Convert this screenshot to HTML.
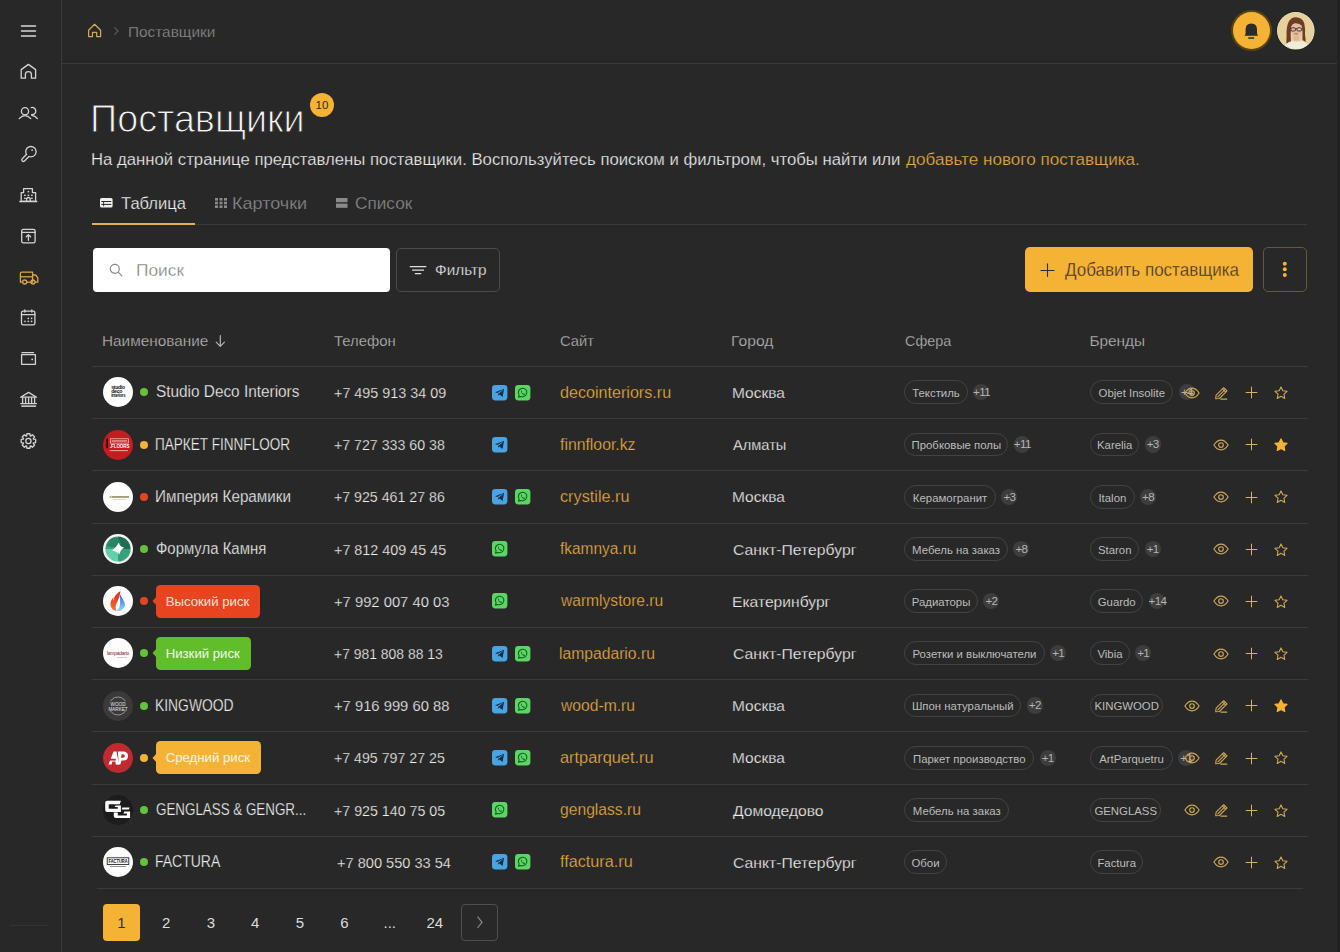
<!DOCTYPE html><html><head><meta charset="utf-8"><style>
*{box-sizing:border-box;margin:0;padding:0}
html,body{width:1340px;height:952px;overflow:hidden;background:#282828;font-family:"Liberation Sans",sans-serif}
.t{position:absolute;line-height:1;white-space:nowrap}
.a{position:absolute}
svg{position:absolute;overflow:visible}
</style></head><body>
<div class="a" style="left:61px;top:0;width:1px;height:952px;background:#3a3a3a"></div>
<div class="a" style="left:62px;top:63px;width:1276px;height:1px;background:#3a3a3a"></div>
<div class="a" style="left:1337px;top:0;width:3px;height:952px;background:#222"></div>
<svg style="left:0;top:0" width="62" height="60"><g stroke="#d8d8d8" stroke-width="1.5" stroke-linecap="round"><path d="M21.5 26H35.5M21.5 31H35.5M21.5 36H35.5"/></g></svg>
<svg style="left:0;top:0" width="1" height="1"><path d="M88.6 36.6V30.3L94.6 24.3L100.6 30.3V36.6H96.7V32.4H92.5V36.6Z" fill="none" stroke="#CFA955" stroke-width="1.25" stroke-linejoin="round"/></svg>
<svg style="left:0;top:0" width="1" height="1"><path d="M114.3 27.4L118.1 31L114.3 34.6" fill="none" stroke="#5c5c5c" stroke-width="1.2"/></svg>
<div class="t" style="left:128.30px;top:23.56px;font-size:15.4px;color:#8c8c8c;font-weight:normal;transform:scaleX(0.9974);transform-origin:0 0;-webkit-text-stroke:0.25px #282828;">Поставщики</div>
<div class="a" style="left:1230.5px;top:10px;width:41px;height:41px;border-radius:50%;background:#5a4313"></div>
<div class="a" style="left:1232.5px;top:12px;width:37px;height:37px;border-radius:50%;background:#F5B335"></div>
<svg style="left:0;top:0" width="1" height="1"><path d="M1244.6 35.7L1245.6 33.5V29.5Q1245.6 23.4 1251.3 23.4Q1257 23.4 1257 29.5V33.5L1258 35.7Z" fill="#2b2b2b"/><rect x="1248.3" y="37.3" width="5.8" height="1.5" fill="#2b2b2b"/></svg>
<svg style="left:1276.4px;top:10.9px" width="39.6" height="39.6" viewBox="-1 -1 39.6 39.6">
<defs><clipPath id="av"><circle cx="18.8" cy="18.8" r="18.3"/></clipPath></defs>
<circle cx="18.8" cy="18.8" r="19.6" fill="#1f1f1f"/>
<circle cx="18.8" cy="18.8" r="18.8" fill="#efe3c2"/>
<g clip-path="url(#av)">
<rect x="-1" y="-1" width="40" height="40" fill="#e6d09c"/>
<path d="M10.5 36Q8.6 30 9.6 24Q9 16 11.5 10Q14 5 19 5.2Q25 5.4 27.2 11Q28.6 17 28 23Q28.8 27 28.6 30L25.5 28Q26 20 24.5 13Q20 10 14.5 14Q13 22 14 30Q12.8 33 12 37Z" fill="#6e3d22"/>
<ellipse cx="19.4" cy="17.8" rx="5.6" ry="7.6" fill="#e2bda4"/>
<path d="M13.8 13.5Q16 8 20 8.5Q25 9 25.5 14Q22 10.8 18 11.2Q15 12 13.8 13.5Z" fill="#6e3d22"/>
<g fill="none" stroke="#3b2a24" stroke-width="0.9"><rect x="13.9" y="15.8" width="4.6" height="3.2" rx="1.2"/><rect x="19.9" y="15.8" width="4.6" height="3.2" rx="1.2"/><path d="M18.5 16.8H19.9"/></g>
<path d="M17.4 21.4Q19.2 22.4 21 21.4Q19.2 22.9 17.4 21.4Z" fill="#c55a4a" stroke="#c55a4a" stroke-width="0.6"/>
<path d="M16.5 24.5V28.5H22.2V24.5Z" fill="#ddb49c"/>
<path d="M5 40Q7 30.5 15 29Q19.5 30.5 24 29Q32 30 34 40Z" fill="#f1ebda"/>
</g></svg>
<svg style="left:0;top:0" width="62" height="460"><g fill="none" stroke="#d4d4d4" stroke-width="1.3" stroke-linejoin="round" stroke-linecap="round">
<path d="M21.2 78.2V69.6L28.4 64.4L35.6 69.6V78.2H31.4V74.3Q31.4 71.6 28.4 71.6Q25.4 71.6 25.4 74.3V78.2Z"/>
<circle cx="25" cy="111.2" r="3.6"/>
<path d="M19.2 118.6Q25 112.6 30.8 118.6"/>
<path d="M31.2 107.6A3.6 3.6 0 1 1 31.6 114.6"/>
<path d="M31.8 115.3Q35.2 115.6 37.4 118.6"/>
<path d="M23.6 188.6H32.4V192.6H35.6V201.3H21.2V192.6H23.6Z"/>
<path d="M19.8 201.5H36.8"/>
<path d="M26.6 201.3V198.4Q28.4 196.6 30.2 198.4V201.3"/>
<rect x="21.7" y="229.4" width="13.4" height="13.4" rx="1.6"/>
<path d="M21.7 232.4H35.1M28.4 240.3V234.6M26.2 236.8L28.4 234.6L30.6 236.8"/>
<rect x="21.5" y="311.2" width="13.4" height="13.6" rx="1.6"/>
<path d="M21.5 314.6H34.9M24.8 309.8V312M31.8 309.8V312"/>
<path d="M21.6 354.7H35.4V364.3H21.6Z"/>
<path d="M21.9 352.6H33.6"/>
<path d="M20.6 397.2L28.6 392.4L36.6 397.2Z"/>
<path d="M22.6 398V403M25.6 398V403M28.6 398V403M31.6 398V403M34.6 398V403"/>
<path d="M20.8 403.6H36.4"/>
<path d="M33.48 439.17 L35.64 439.48 L35.64 442.52 L33.48 442.83 L33.29 443.30 L34.60 445.04 L32.44 447.20 L30.70 445.89 L30.23 446.08 L29.92 448.24 L26.88 448.24 L26.57 446.08 L26.10 445.89 L24.36 447.20 L22.20 445.04 L23.51 443.30 L23.32 442.83 L21.16 442.52 L21.16 439.48 L23.32 439.17 L23.51 438.70 L22.20 436.96 L24.36 434.80 L26.10 436.11 L26.57 435.92 L26.88 433.76 L29.92 433.76 L30.23 435.92 L30.70 436.11 L32.44 434.80 L34.60 436.96 L33.29 438.70Z"/>
<circle cx="28.4" cy="441" r="2.6"/>
</g>
<g fill="#d4d4d4">
<rect x="24.1" y="194.6" width="1.6" height="1.4"/><rect x="27.6" y="194.6" width="1.6" height="1.4"/><rect x="31.1" y="194.6" width="1.6" height="1.4"/>
<rect x="27.6" y="191" width="1.6" height="1.4"/><rect x="24.1" y="197.6" width="1.6" height="1.4"/><rect x="31.1" y="197.6" width="1.6" height="1.4"/>
<rect x="21.3" y="405.4" width="14.8" height="1.5"/>
<circle cx="28.3" cy="318.3" r="0.85"/><circle cx="31.6" cy="318.3" r="0.85"/><circle cx="25" cy="321.3" r="0.85"/><circle cx="28.3" cy="321.3" r="0.85"/><circle cx="31.6" cy="321.3" r="0.85"/>
<circle cx="32.2" cy="359.4" r="0.9"/>
</g>
<path d="M28 155.2L23.4 159.8" stroke="#d4d4d4" stroke-width="4.5" stroke-linecap="round"/>
<circle cx="30.9" cy="151.7" r="5.85" fill="#d4d4d4"/>
<path d="M28 155.2L23.4 159.8" stroke="#282828" stroke-width="1.9" stroke-linecap="round"/>
<circle cx="30.9" cy="151.7" r="4.55" fill="#282828"/>
<circle cx="32.1" cy="150.1" r="0.9" fill="#d4d4d4"/>
<g fill="none" stroke="#D9A843" stroke-width="1.3" stroke-linejoin="round">
<path d="M22.6 282.2H20.4V273.6Q20.4 272.2 21.8 272.2H32.6V282.2H30.8"/>
<path d="M32.6 275H35.6L37.8 278V282.2H35"/>
<path d="M26.7 282.2H31"/>
<circle cx="24.7" cy="282" r="2"/>
<circle cx="33" cy="282" r="2"/>
<path d="M20.6 276.8H32.4"/>
</g>
</svg>
<div class="a" style="left:10px;top:925px;width:38px;height:1px;background:#333"></div>
<div class="t" style="left:90.02px;top:100.43px;font-size:38px;color:#f4f4f4;font-weight:normal;transform:scaleX(0.9935);transform-origin:0 0;-webkit-text-stroke:0.25px #282828;-webkit-text-stroke:1px #282828">Поставщики</div>
<div class="a" style="left:310px;top:93px;width:24px;height:24px;border-radius:50%;background:#F5B335;color:#2a2a2a;font-size:11.5px;line-height:24px;text-align:center">10</div>
<div class="t" style="left:91.15px;top:152.06px;font-size:16px;color:#f0f0f0;font-weight:normal;transform:scaleX(1.0452);transform-origin:0 0;-webkit-text-stroke:0.25px #282828;">На данной странице представлены поставщики. Воспользуйтесь поиском и фильтром, чтобы найти или</div>
<div class="t" style="left:906.30px;top:152.06px;font-size:16px;color:#EAAD40;font-weight:normal;transform:scaleX(1.0693);transform-origin:0 0;-webkit-text-stroke:0.25px #282828;">добавьте нового поставщика.</div>
<div class="a" style="left:92px;top:224px;width:1215px;height:1px;background:#3a3a3a"></div>
<div class="a" style="left:92px;top:222.5px;width:102.5px;height:2.5px;background:#E3AF50"></div>
<svg style="left:100.2px;top:197.8px" width="12.6" height="9.6" viewBox="0 0 12.6 9.6"><rect x="0" y="0" width="12.6" height="9.6" rx="1.6" fill="#f0f0f0"/><rect x="1.3" y="3" width="10" height="1" fill="#282828"/><rect x="1.3" y="5.9" width="10" height="1" fill="#282828"/><rect x="3.2" y="3" width="0.9" height="5.2" fill="#282828"/></svg>
<div class="t" style="left:120.50px;top:195.11px;font-size:17px;color:#f0f0f0;font-weight:normal;transform:scaleX(0.9747);transform-origin:0 0;-webkit-text-stroke:0.25px #282828;">Таблица</div>
<svg style="left:214.5px;top:198px" width="12" height="10" viewBox="0 0 12 10"><g fill="#8a8a8a"><rect x="0" y="0" width="3" height="2.6"/><rect x="0" y="3.7" width="3" height="2.6"/><rect x="0" y="7.4" width="3" height="2.6"/><rect x="4.5" y="0" width="3" height="2.6"/><rect x="4.5" y="3.7" width="3" height="2.6"/><rect x="4.5" y="7.4" width="3" height="2.6"/><rect x="9" y="0" width="3" height="2.6"/><rect x="9" y="3.7" width="3" height="2.6"/><rect x="9" y="7.4" width="3" height="2.6"/></g></svg>
<div class="t" style="left:232.34px;top:195.11px;font-size:17px;color:#8a8a8a;font-weight:normal;transform:scaleX(1.0604);transform-origin:0 0;-webkit-text-stroke:0.25px #282828;">Карточки</div>
<svg style="left:335.5px;top:198px" width="12" height="10" viewBox="0 0 12 10"><g fill="#8a8a8a"><rect x="0" y="0" width="11.5" height="4.2"/><rect x="0" y="5.6" width="11.5" height="4.2"/></g></svg>
<div class="t" style="left:354.50px;top:195.11px;font-size:17px;color:#8a8a8a;font-weight:normal;transform:scaleX(1.0118);transform-origin:0 0;-webkit-text-stroke:0.25px #282828;">Список</div>
<div class="a" style="left:92.5px;top:248px;width:297px;height:43.5px;border-radius:4px;background:#ffffff"></div>
<svg style="left:109px;top:263px" width="14" height="14" viewBox="0 0 14 14"><g fill="none" stroke="#8a8a8a" stroke-width="1.2"><circle cx="5.8" cy="5.8" r="4.5"/><path d="M9.2 9.2L12.8 12.8" stroke-linecap="round"/></g></svg>
<div class="t" style="left:135.97px;top:262.78px;font-size:16.8px;color:#7a7a7a;font-weight:normal;transform:scaleX(1.0334);transform-origin:0 0;-webkit-text-stroke:0.25px #282828;-webkit-text-stroke:0.3px #ffffff">Поиск</div>
<div class="a" style="left:395.5px;top:247.5px;width:104.5px;height:44px;border-radius:5px;border:1px solid #4b4b4b"></div>
<svg style="left:0;top:0" width="1" height="1"><g stroke="#e0e0e0" stroke-width="1.3" stroke-linecap="round"><path d="M410.3 266.7H425.8M412.6 270.2H423.5M415.4 273.7H420.7"/></g></svg>
<div class="t" style="left:434.60px;top:263.18px;font-size:14.2px;color:#eeeeee;font-weight:normal;transform:scaleX(1.0823);transform-origin:0 0;-webkit-text-stroke:0.25px #282828;">Фильтр</div>
<div class="a" style="left:1024.5px;top:247px;width:228.5px;height:45px;border-radius:5px;background:#F5B335"></div>
<svg style="left:0;top:0" width="1" height="1"><g stroke="#2e2e2e" stroke-width="1.1"><path d="M1047.5 263.5V277M1040.5 270.5H1054.5"/></g></svg>
<div class="t" style="left:1064.70px;top:262.30px;font-size:17.6px;color:#2b2b2b;font-weight:normal;transform:scaleX(0.9671);transform-origin:0 0;-webkit-text-stroke:0.25px #282828;-webkit-text-stroke:0.35px #F5B335">Добавить поставщика</div>
<div class="a" style="left:1262.5px;top:247px;width:44.5px;height:45px;border-radius:5px;border:1px solid #68583a"></div>
<svg style="left:0;top:0" width="1" height="1"><g fill="#F5B335"><circle cx="1284.8" cy="263.7" r="2"/><circle cx="1284.8" cy="269.3" r="2"/><circle cx="1284.8" cy="275" r="2"/></g></svg>
<div class="t" style="left:102.40px;top:332.56px;font-size:15.4px;color:#b6b6b6;font-weight:normal;transform:scaleX(0.9959);transform-origin:0 0;-webkit-text-stroke:0.25px #282828;">Наименование</div>
<svg style="left:0;top:0" width="1" height="1"><g fill="none" stroke="#b6b6b6" stroke-width="1.2" stroke-linecap="round" stroke-linejoin="round"><path d="M220.3 335.5V346.3M216.2 342.2L220.3 346.3L224.4 342.2"/></g></svg>
<div class="t" style="left:334.00px;top:332.56px;font-size:15.4px;color:#b6b6b6;font-weight:normal;transform:scaleX(0.9661);transform-origin:0 0;-webkit-text-stroke:0.25px #282828;">Телефон</div>
<div class="t" style="left:559.70px;top:332.56px;font-size:15.4px;color:#b6b6b6;font-weight:normal;transform:scaleX(0.9593);transform-origin:0 0;-webkit-text-stroke:0.25px #282828;">Сайт</div>
<div class="t" style="left:731.28px;top:332.56px;font-size:15.4px;color:#b6b6b6;font-weight:normal;transform:scaleX(1.0186);transform-origin:0 0;-webkit-text-stroke:0.25px #282828;">Город</div>
<div class="t" style="left:904.70px;top:332.56px;font-size:15.4px;color:#b6b6b6;font-weight:normal;transform:scaleX(0.9339);transform-origin:0 0;-webkit-text-stroke:0.25px #282828;">Сфера</div>
<div class="t" style="left:1089.40px;top:332.56px;font-size:15.4px;color:#b6b6b6;font-weight:normal;transform:scaleX(1.0000);transform-origin:0 0;-webkit-text-stroke:0.25px #282828;">Бренды</div>
<div class="a" style="left:92px;top:366px;width:1215.5px;height:1px;background:#3a3a3a"></div>
<div class="a" style="left:92px;top:418.2px;width:1215.5px;height:1px;background:#3a3a3a"></div>
<svg style="left:103px;top:377.30px" width="30" height="30" viewBox="0 0 30 30" font-family="Liberation Sans"><circle cx="15" cy="15" r="15" fill="#fdfdfd"/><g fill="#111" font-size="5.2" font-weight="bold" letter-spacing="-0.3"><text x="8.2" y="12.2">studio</text><text x="8.2" y="16.3">deco</text><text x="8.2" y="20.4" textLength="14" lengthAdjust="spacingAndGlyphs">interiors</text></g></svg>
<div class="a" style="left:140px;top:388.30px;width:8px;height:8px;border-radius:50%;background:#66C13A"></div>
<div class="t" style="left:155.50px;top:384.36px;font-size:16px;color:#f0f0f0;font-weight:normal;transform:scaleX(0.9598);transform-origin:0 0;-webkit-text-stroke:0.25px #282828;">Studio Deco Interiors</div>
<div class="t" style="left:334.00px;top:385.08px;font-size:15.5px;color:#f0f0f0;font-weight:normal;transform:scaleX(0.9263);transform-origin:0 0;-webkit-text-stroke:0.25px #282828;">+7 495 913 34 09</div>
<svg style="left:492.2px;top:384.60px" width="15.4" height="15.4" viewBox="0 0 16 16"><rect width="16" height="16" rx="3.5" fill="#4AA3E2"/><path d="M3.2 7.6L12.6 3.9L11 12.4L7.6 9.9L6.2 11.3L6.4 8.9L11.2 5.1L5.5 8.4Z" fill="#16324a"/><path d="M6.4 8.9L11.2 5.1" stroke="#7cc0ee" stroke-width="0.5"/></svg>
<svg style="left:514.7px;top:384.60px" width="15.4" height="15.4" viewBox="0 0 16 16"><rect width="16" height="16" rx="3.5" fill="#5ED465"/><path d="M3.6 12.6L4.3 10.2Q3.3 8.6 3.6 6.8Q4.3 3.8 7.6 3.4Q10.8 3.2 12.1 6Q13 8.7 11.1 10.9Q9 12.9 6 11.9Z" fill="none" stroke="#07661a" stroke-width="1.1" stroke-linejoin="round"/><path d="M6.2 5.9Q6 7.6 7.6 9.3Q9.2 10.6 10.3 10L10.3 9.3L9.2 8.7L8.6 9.2Q7.3 8.5 6.9 7.3L7.3 6.7L6.8 5.6Z" fill="#07661a"/></svg>
<div class="t" style="left:559.80px;top:384.66px;font-size:16px;color:#EAAD40;font-weight:normal;transform:scaleX(1.0075);transform-origin:0 0;-webkit-text-stroke:0.25px #282828;">decointeriors.ru</div>
<div class="t" style="left:731.80px;top:385.08px;font-size:15.5px;color:#f0f0f0;font-weight:normal;transform:scaleX(0.9981);transform-origin:0 0;-webkit-text-stroke:0.25px #282828;">Москва</div>
<div class="a" style="left:904.2px;top:380.40px;width:63.6px;height:23.8px;border:1px solid #434343;border-radius:12px;color:#bcbcbc;font-size:11.4px;line-height:21.8px;padding-top:1.9px;text-align:center;white-space:nowrap">Текстиль</div><div class="a" style="left:973.1px;top:384.20px;width:16.2px;height:16.2px;border-radius:50%;background:#3d3d3d;color:#b4b4b4;font-size:11.6px;line-height:16.2px;padding-top:0px;text-align:center;letter-spacing:-0.6px;white-space:nowrap">+11</div>
<div class="a" style="left:1090.2px;top:380.40px;width:83.3px;height:23.8px;border:1px solid #434343;border-radius:12px;color:#bcbcbc;font-size:11.4px;line-height:21.8px;padding-top:1.9px;text-align:center;white-space:nowrap">Objet Insolite</div><div class="a" style="left:1178.8px;top:384.20px;width:16.2px;height:16.2px;border-radius:50%;background:#3d3d3d;color:#b4b4b4;font-size:11.6px;line-height:16.2px;padding-top:0px;text-align:center;letter-spacing:-0.6px;white-space:nowrap">+4</div>
<svg style="left:1183.7px;top:386.6px" width="16" height="12" viewBox="0 0 16 12"><g fill="none" stroke="#CDA657" stroke-width="1.15"><path d="M0.9 6Q4 1.1 8 1.1Q12 1.1 15.1 6Q12 10.9 8 10.9Q4 10.9 0.9 6Z"/><circle cx="8" cy="6" r="2.3"/></g></svg>
<svg style="left:1214.4px;top:385.6px" width="14" height="14" viewBox="0 0 14 14"><g fill="none" stroke="#CDA657" stroke-width="1.1" stroke-linejoin="round" stroke-linecap="round"><path d="M1.7 12.7L2.1 9.2L9.7 1.6L13 4.9L5.4 12.5Z"/><path d="M3.8 10.9L11.3 3.3"/><path d="M8.4 2.9L11.7 6.2"/><path d="M6.8 13.1H12.8"/></g></svg>
<svg style="left:1245px;top:386px" width="13" height="13" viewBox="0 0 13 13"><g stroke="#D6B360" stroke-width="1"><path d="M6.5 0.7V12.3M0.7 6.5H12.3"/></g></svg>
<svg style="left:1274px;top:385.90000000000003px" width="14" height="14" viewBox="0 0 14 14"><path d="M7 0.9L8.85 4.75L13.05 5.3L9.95 8.2L10.75 12.4L7 10.35L3.25 12.4L4.05 8.2L0.95 5.3L5.15 4.75Z" fill="none" stroke="#CDA657" stroke-width="1.1" stroke-linejoin="round"/></svg>
<div class="a" style="left:92px;top:470.4px;width:1215.5px;height:1px;background:#3a3a3a"></div>
<svg style="left:103px;top:429.50px" width="30" height="30" viewBox="0 0 30 30" font-family="Liberation Sans"><circle cx="15" cy="15" r="15" fill="#C41C20"/><rect x="7.3" y="8.8" width="18.3" height="4.3" fill="none" stroke="#f3d0d0" stroke-width="0.7"/><rect x="8.6" y="10.2" width="15.6" height="1.5" fill="#e89a9a"/><rect x="3.3" y="8.6" width="1.6" height="9.6" fill="#1a0a0a"/><text x="6.8" y="18.2" font-size="4.6" font-weight="bold" fill="#fff" letter-spacing="-0.1">.FLOORS</text><rect x="6.8" y="20.3" width="18" height="0.8" fill="#f3c8c8"/></svg>
<div class="a" style="left:140px;top:440.50px;width:8px;height:8px;border-radius:50%;background:#F5B335"></div>
<div class="t" style="left:154.65px;top:436.56px;font-size:16px;color:#f0f0f0;font-weight:normal;transform:scaleX(0.8465);transform-origin:0 0;-webkit-text-stroke:0.25px #282828;">ПАРКЕТ FINNFLOOR</div>
<div class="t" style="left:334.00px;top:437.28px;font-size:15.5px;color:#f0f0f0;font-weight:normal;transform:scaleX(0.9147);transform-origin:0 0;-webkit-text-stroke:0.25px #282828;">+7 727 333 60 38</div>
<svg style="left:492.2px;top:436.80px" width="15.4" height="15.4" viewBox="0 0 16 16"><rect width="16" height="16" rx="3.5" fill="#4AA3E2"/><path d="M3.2 7.6L12.6 3.9L11 12.4L7.6 9.9L6.2 11.3L6.4 8.9L11.2 5.1L5.5 8.4Z" fill="#16324a"/><path d="M6.4 8.9L11.2 5.1" stroke="#7cc0ee" stroke-width="0.5"/></svg>
<div class="t" style="left:559.80px;top:436.86px;font-size:16px;color:#EAAD40;font-weight:normal;transform:scaleX(0.9871);transform-origin:0 0;-webkit-text-stroke:0.25px #282828;">finnfloor.kz</div>
<div class="t" style="left:732.80px;top:437.28px;font-size:15.5px;color:#f0f0f0;font-weight:normal;transform:scaleX(0.9430);transform-origin:0 0;-webkit-text-stroke:0.25px #282828;">Алматы</div>
<div class="a" style="left:904.2px;top:432.60px;width:104.3px;height:23.8px;border:1px solid #434343;border-radius:12px;color:#bcbcbc;font-size:11.4px;line-height:21.8px;padding-top:1.9px;text-align:center;white-space:nowrap">Пробковые полы</div><div class="a" style="left:1013.8px;top:436.40px;width:16.2px;height:16.2px;border-radius:50%;background:#3d3d3d;color:#b4b4b4;font-size:11.6px;line-height:16.2px;padding-top:0px;text-align:center;letter-spacing:-0.6px;white-space:nowrap">+11</div>
<div class="a" style="left:1090.2px;top:432.60px;width:49.1px;height:23.8px;border:1px solid #434343;border-radius:12px;color:#bcbcbc;font-size:11.4px;line-height:21.8px;padding-top:1.9px;text-align:center;white-space:nowrap">Karelia</div><div class="a" style="left:1144.6px;top:436.40px;width:16.2px;height:16.2px;border-radius:50%;background:#3d3d3d;color:#b4b4b4;font-size:11.6px;line-height:16.2px;padding-top:0px;text-align:center;letter-spacing:-0.6px;white-space:nowrap">+3</div>
<svg style="left:1213.4px;top:438.8px" width="16" height="12" viewBox="0 0 16 12"><g fill="none" stroke="#CDA657" stroke-width="1.15"><path d="M0.9 6Q4 1.1 8 1.1Q12 1.1 15.1 6Q12 10.9 8 10.9Q4 10.9 0.9 6Z"/><circle cx="8" cy="6" r="2.3"/></g></svg>
<svg style="left:1245px;top:438px" width="13" height="13" viewBox="0 0 13 13"><g stroke="#D6B360" stroke-width="1"><path d="M6.5 0.7V12.3M0.7 6.5H12.3"/></g></svg>
<svg style="left:1274px;top:438.1px" width="14" height="14" viewBox="0 0 14 14"><path d="M7 0.9L8.85 4.75L13.05 5.3L9.95 8.2L10.75 12.4L7 10.35L3.25 12.4L4.05 8.2L0.95 5.3L5.15 4.75Z" fill="#F5B335" stroke="#F5B335" stroke-width="1.2" stroke-linejoin="round"/></svg>
<div class="a" style="left:92px;top:522.6px;width:1215.5px;height:1px;background:#3a3a3a"></div>
<svg style="left:103px;top:481.70px" width="30" height="30" viewBox="0 0 30 30" font-family="Liberation Sans"><circle cx="15" cy="15" r="15" fill="#fdfdfd"/><rect x="6.5" y="14.4" width="2.2" height="1.2" fill="#9d8a4a"/><rect x="9" y="14" width="17" height="1.9" fill="#8a7a50" opacity="0.75"/><rect x="10" y="17" width="13" height="0.6" fill="#c9c0a0"/></svg>
<div class="a" style="left:140px;top:492.70px;width:8px;height:8px;border-radius:50%;background:#E8441F"></div>
<div class="t" style="left:154.55px;top:488.76px;font-size:16px;color:#f0f0f0;font-weight:normal;transform:scaleX(0.9513);transform-origin:0 0;-webkit-text-stroke:0.25px #282828;">Империя Керамики</div>
<div class="t" style="left:334.00px;top:489.48px;font-size:15.5px;color:#f0f0f0;font-weight:normal;transform:scaleX(0.9147);transform-origin:0 0;-webkit-text-stroke:0.25px #282828;">+7 925 461 27 86</div>
<svg style="left:492.2px;top:489.00px" width="15.4" height="15.4" viewBox="0 0 16 16"><rect width="16" height="16" rx="3.5" fill="#4AA3E2"/><path d="M3.2 7.6L12.6 3.9L11 12.4L7.6 9.9L6.2 11.3L6.4 8.9L11.2 5.1L5.5 8.4Z" fill="#16324a"/><path d="M6.4 8.9L11.2 5.1" stroke="#7cc0ee" stroke-width="0.5"/></svg>
<svg style="left:514.7px;top:489.00px" width="15.4" height="15.4" viewBox="0 0 16 16"><rect width="16" height="16" rx="3.5" fill="#5ED465"/><path d="M3.6 12.6L4.3 10.2Q3.3 8.6 3.6 6.8Q4.3 3.8 7.6 3.4Q10.8 3.2 12.1 6Q13 8.7 11.1 10.9Q9 12.9 6 11.9Z" fill="none" stroke="#07661a" stroke-width="1.1" stroke-linejoin="round"/><path d="M6.2 5.9Q6 7.6 7.6 9.3Q9.2 10.6 10.3 10L10.3 9.3L9.2 8.7L8.6 9.2Q7.3 8.5 6.9 7.3L7.3 6.7L6.8 5.6Z" fill="#07661a"/></svg>
<div class="t" style="left:559.80px;top:489.06px;font-size:16px;color:#EAAD40;font-weight:normal;transform:scaleX(1.0155);transform-origin:0 0;-webkit-text-stroke:0.25px #282828;">crystile.ru</div>
<div class="t" style="left:731.80px;top:489.48px;font-size:15.5px;color:#f0f0f0;font-weight:normal;transform:scaleX(0.9981);transform-origin:0 0;-webkit-text-stroke:0.25px #282828;">Москва</div>
<div class="a" style="left:904.2px;top:484.80px;width:91.8px;height:23.8px;border:1px solid #434343;border-radius:12px;color:#bcbcbc;font-size:11.4px;line-height:21.8px;padding-top:1.9px;text-align:center;white-space:nowrap">Керамогранит</div><div class="a" style="left:1001.3px;top:488.60px;width:16.2px;height:16.2px;border-radius:50%;background:#3d3d3d;color:#b4b4b4;font-size:11.6px;line-height:16.2px;padding-top:0px;text-align:center;letter-spacing:-0.6px;white-space:nowrap">+3</div>
<div class="a" style="left:1090.2px;top:484.80px;width:44.4px;height:23.8px;border:1px solid #434343;border-radius:12px;color:#bcbcbc;font-size:11.4px;line-height:21.8px;padding-top:1.9px;text-align:center;white-space:nowrap">Italon</div><div class="a" style="left:1139.9px;top:488.60px;width:16.2px;height:16.2px;border-radius:50%;background:#3d3d3d;color:#b4b4b4;font-size:11.6px;line-height:16.2px;padding-top:0px;text-align:center;letter-spacing:-0.6px;white-space:nowrap">+8</div>
<svg style="left:1213.4px;top:491.0px" width="16" height="12" viewBox="0 0 16 12"><g fill="none" stroke="#CDA657" stroke-width="1.15"><path d="M0.9 6Q4 1.1 8 1.1Q12 1.1 15.1 6Q12 10.9 8 10.9Q4 10.9 0.9 6Z"/><circle cx="8" cy="6" r="2.3"/></g></svg>
<svg style="left:1245px;top:491px" width="13" height="13" viewBox="0 0 13 13"><g stroke="#D6B360" stroke-width="1"><path d="M6.5 0.7V12.3M0.7 6.5H12.3"/></g></svg>
<svg style="left:1274px;top:490.3px" width="14" height="14" viewBox="0 0 14 14"><path d="M7 0.9L8.85 4.75L13.05 5.3L9.95 8.2L10.75 12.4L7 10.35L3.25 12.4L4.05 8.2L0.95 5.3L5.15 4.75Z" fill="none" stroke="#CDA657" stroke-width="1.1" stroke-linejoin="round"/></svg>
<div class="a" style="left:92px;top:574.8px;width:1215.5px;height:1px;background:#3a3a3a"></div>
<svg style="left:103px;top:533.90px" width="30" height="30" viewBox="0 0 30 30" font-family="Liberation Sans"><circle cx="15" cy="15" r="15" fill="#f4f7f5"/><clipPath id="fk"><circle cx="15" cy="15" r="12.6"/></clipPath><g clip-path="url(#fk)"><rect x="0" y="0" width="15" height="15" fill="#3f9e7c"/><rect x="15" y="0" width="15" height="15" fill="#1f6d52"/><rect x="0" y="15" width="15" height="15" fill="#62d0a8"/><rect x="15" y="15" width="15" height="15" fill="#38a07c"/><path d="M11 3Q20 5 17 15L4 12Q5 6 11 3Z" fill="#2a8466"/></g><path d="M15.8 8.8Q16.8 12.8 21.2 13.6Q17.4 15.6 16.6 20.2Q13.8 17 9 16.4Q12.8 14 15.8 8.8Z" fill="#ffffff"/></svg>
<div class="a" style="left:140px;top:544.90px;width:8px;height:8px;border-radius:50%;background:#66C13A"></div>
<div class="t" style="left:155.50px;top:540.96px;font-size:16px;color:#f0f0f0;font-weight:normal;transform:scaleX(0.9326);transform-origin:0 0;-webkit-text-stroke:0.25px #282828;">Формула Камня</div>
<div class="t" style="left:334.00px;top:541.68px;font-size:15.5px;color:#f0f0f0;font-weight:normal;transform:scaleX(0.9263);transform-origin:0 0;-webkit-text-stroke:0.25px #282828;">+7 812 409 45 45</div>
<svg style="left:492.2px;top:541.20px" width="15.4" height="15.4" viewBox="0 0 16 16"><rect width="16" height="16" rx="3.5" fill="#5ED465"/><path d="M3.6 12.6L4.3 10.2Q3.3 8.6 3.6 6.8Q4.3 3.8 7.6 3.4Q10.8 3.2 12.1 6Q13 8.7 11.1 10.9Q9 12.9 6 11.9Z" fill="none" stroke="#07661a" stroke-width="1.1" stroke-linejoin="round"/><path d="M6.2 5.9Q6 7.6 7.6 9.3Q9.2 10.6 10.3 10L10.3 9.3L9.2 8.7L8.6 9.2Q7.3 8.5 6.9 7.3L7.3 6.7L6.8 5.6Z" fill="#07661a"/></svg>
<div class="t" style="left:559.80px;top:541.26px;font-size:16px;color:#EAAD40;font-weight:normal;transform:scaleX(0.9650);transform-origin:0 0;-webkit-text-stroke:0.25px #282828;">fkamnya.ru</div>
<div class="t" style="left:732.80px;top:541.68px;font-size:15.5px;color:#f0f0f0;font-weight:normal;transform:scaleX(1.0155);transform-origin:0 0;-webkit-text-stroke:0.25px #282828;">Санкт-Петербург</div>
<div class="a" style="left:904.2px;top:537.00px;width:103.8px;height:23.8px;border:1px solid #434343;border-radius:12px;color:#bcbcbc;font-size:11.4px;line-height:21.8px;padding-top:1.9px;text-align:center;white-space:nowrap">Мебель на заказ</div><div class="a" style="left:1013.3px;top:540.80px;width:16.2px;height:16.2px;border-radius:50%;background:#3d3d3d;color:#b4b4b4;font-size:11.6px;line-height:16.2px;padding-top:0px;text-align:center;letter-spacing:-0.6px;white-space:nowrap">+8</div>
<div class="a" style="left:1090.2px;top:537.00px;width:49.1px;height:23.8px;border:1px solid #434343;border-radius:12px;color:#bcbcbc;font-size:11.4px;line-height:21.8px;padding-top:1.9px;text-align:center;white-space:nowrap">Staron</div><div class="a" style="left:1144.6px;top:540.80px;width:16.2px;height:16.2px;border-radius:50%;background:#3d3d3d;color:#b4b4b4;font-size:11.6px;line-height:16.2px;padding-top:0px;text-align:center;letter-spacing:-0.6px;white-space:nowrap">+1</div>
<svg style="left:1213.4px;top:543.1999999999999px" width="16" height="12" viewBox="0 0 16 12"><g fill="none" stroke="#CDA657" stroke-width="1.15"><path d="M0.9 6Q4 1.1 8 1.1Q12 1.1 15.1 6Q12 10.9 8 10.9Q4 10.9 0.9 6Z"/><circle cx="8" cy="6" r="2.3"/></g></svg>
<svg style="left:1245px;top:543px" width="13" height="13" viewBox="0 0 13 13"><g stroke="#D6B360" stroke-width="1"><path d="M6.5 0.7V12.3M0.7 6.5H12.3"/></g></svg>
<svg style="left:1274px;top:542.5px" width="14" height="14" viewBox="0 0 14 14"><path d="M7 0.9L8.85 4.75L13.05 5.3L9.95 8.2L10.75 12.4L7 10.35L3.25 12.4L4.05 8.2L0.95 5.3L5.15 4.75Z" fill="none" stroke="#CDA657" stroke-width="1.1" stroke-linejoin="round"/></svg>
<div class="a" style="left:92px;top:627.0px;width:1215.5px;height:1px;background:#3a3a3a"></div>
<svg style="left:103px;top:586.10px" width="30" height="30" viewBox="0 0 30 30" font-family="Liberation Sans"><circle cx="15" cy="15" r="15" fill="#fdfdfd"/><defs><linearGradient id="fr" x1="0" y1="0" x2="0" y2="1"><stop offset="0" stop-color="#e0201e"/><stop offset="1" stop-color="#f47a30"/></linearGradient><linearGradient id="fb" x1="0" y1="0" x2="0" y2="1"><stop offset="0" stop-color="#2f5ee8"/><stop offset="1" stop-color="#8fd8f4"/></linearGradient></defs><path d="M17.5 5Q11 9 10.5 15Q9.8 13 11 11Q7 14.5 7.5 19Q8 24 13.5 25Q11.5 21 14 16.5Q17 11 17.5 5Z" fill="url(#fr)"/><path d="M16.8 8Q20 13 21.5 16.5Q23.5 22 17 25Q14.5 25 13.6 24.5Q17 22.5 17 18Q17.5 13 16.8 8Z" fill="url(#fb)"/></svg>
<div class="a" style="left:140px;top:597.10px;width:8px;height:8px;border-radius:50%;background:#E8441F"></div>
<div class="a" style="left:156px;top:584.50px;width:104.0px;height:33.4px;border-radius:4.5px;background:#E8441F;color:#fde3d9;font-size:13.2px;line-height:33.4px;padding-left:9.7px;white-space:nowrap">Высокий риск</div>
<svg style="left:150.5px;top:596.10px" width="7" height="10" viewBox="0 0 7 10"><path d="M6 0L1.5 5L6 10Z" fill="#E8441F"/></svg>
<div class="t" style="left:334.00px;top:593.88px;font-size:15.5px;color:#f0f0f0;font-weight:normal;transform:scaleX(0.9528);transform-origin:0 0;-webkit-text-stroke:0.25px #282828;">+7 992 007 40 03</div>
<svg style="left:492.2px;top:593.40px" width="15.4" height="15.4" viewBox="0 0 16 16"><rect width="16" height="16" rx="3.5" fill="#5ED465"/><path d="M3.6 12.6L4.3 10.2Q3.3 8.6 3.6 6.8Q4.3 3.8 7.6 3.4Q10.8 3.2 12.1 6Q13 8.7 11.1 10.9Q9 12.9 6 11.9Z" fill="none" stroke="#07661a" stroke-width="1.1" stroke-linejoin="round"/><path d="M6.2 5.9Q6 7.6 7.6 9.3Q9.2 10.6 10.3 10L10.3 9.3L9.2 8.7L8.6 9.2Q7.3 8.5 6.9 7.3L7.3 6.7L6.8 5.6Z" fill="#07661a"/></svg>
<div class="t" style="left:560.77px;top:593.46px;font-size:16px;color:#EAAD40;font-weight:normal;transform:scaleX(0.9742);transform-origin:0 0;-webkit-text-stroke:0.25px #282828;">warmlystore.ru</div>
<div class="t" style="left:731.79px;top:593.88px;font-size:15.5px;color:#f0f0f0;font-weight:normal;transform:scaleX(1.0077);transform-origin:0 0;-webkit-text-stroke:0.25px #282828;">Екатеринбург</div>
<div class="a" style="left:904.2px;top:589.20px;width:73.8px;height:23.8px;border:1px solid #434343;border-radius:12px;color:#bcbcbc;font-size:11.4px;line-height:21.8px;padding-top:1.9px;text-align:center;white-space:nowrap">Радиаторы</div><div class="a" style="left:983.3px;top:593.00px;width:16.2px;height:16.2px;border-radius:50%;background:#3d3d3d;color:#b4b4b4;font-size:11.6px;line-height:16.2px;padding-top:0px;text-align:center;letter-spacing:-0.6px;white-space:nowrap">+2</div>
<div class="a" style="left:1090.2px;top:589.20px;width:53.0px;height:23.8px;border:1px solid #434343;border-radius:12px;color:#bcbcbc;font-size:11.4px;line-height:21.8px;padding-top:1.9px;text-align:center;white-space:nowrap">Guardo</div><div class="a" style="left:1148.5px;top:593.00px;width:16.2px;height:16.2px;border-radius:50%;background:#3d3d3d;color:#b4b4b4;font-size:11.6px;line-height:16.2px;padding-top:0px;text-align:center;letter-spacing:-0.6px;white-space:nowrap">+14</div>
<svg style="left:1213.4px;top:595.3999999999999px" width="16" height="12" viewBox="0 0 16 12"><g fill="none" stroke="#CDA657" stroke-width="1.15"><path d="M0.9 6Q4 1.1 8 1.1Q12 1.1 15.1 6Q12 10.9 8 10.9Q4 10.9 0.9 6Z"/><circle cx="8" cy="6" r="2.3"/></g></svg>
<svg style="left:1245px;top:595px" width="13" height="13" viewBox="0 0 13 13"><g stroke="#D6B360" stroke-width="1"><path d="M6.5 0.7V12.3M0.7 6.5H12.3"/></g></svg>
<svg style="left:1274px;top:594.6999999999999px" width="14" height="14" viewBox="0 0 14 14"><path d="M7 0.9L8.85 4.75L13.05 5.3L9.95 8.2L10.75 12.4L7 10.35L3.25 12.4L4.05 8.2L0.95 5.3L5.15 4.75Z" fill="none" stroke="#CDA657" stroke-width="1.1" stroke-linejoin="round"/></svg>
<div class="a" style="left:92px;top:679.2px;width:1215.5px;height:1px;background:#3a3a3a"></div>
<svg style="left:103px;top:638.30px" width="30" height="30" viewBox="0 0 30 30" font-family="Liberation Sans"><circle cx="15" cy="15" r="15" fill="#fdfdfd"/><text x="15" y="16.8" text-anchor="middle" font-size="5.9" fill="#8a2030" letter-spacing="-0.3" textLength="22" lengthAdjust="spacingAndGlyphs">lampadario</text><rect x="14" y="19" width="10" height="0.5" fill="#999"/></svg>
<div class="a" style="left:140px;top:649.30px;width:8px;height:8px;border-radius:50%;background:#66C13A"></div>
<div class="a" style="left:156px;top:636.70px;width:95.3px;height:33.4px;border-radius:4.5px;background:#62BD2B;color:#effbe6;font-size:13.2px;line-height:33.4px;padding-left:9.7px;white-space:nowrap">Низкий риск</div>
<svg style="left:150.5px;top:648.30px" width="7" height="10" viewBox="0 0 7 10"><path d="M6 0L1.5 5L6 10Z" fill="#62BD2B"/></svg>
<div class="t" style="left:334.00px;top:646.08px;font-size:15.5px;color:#f0f0f0;font-weight:normal;transform:scaleX(0.8989);transform-origin:0 0;-webkit-text-stroke:0.25px #282828;">+7 981 808 88 13</div>
<svg style="left:492.2px;top:645.60px" width="15.4" height="15.4" viewBox="0 0 16 16"><rect width="16" height="16" rx="3.5" fill="#4AA3E2"/><path d="M3.2 7.6L12.6 3.9L11 12.4L7.6 9.9L6.2 11.3L6.4 8.9L11.2 5.1L5.5 8.4Z" fill="#16324a"/><path d="M6.4 8.9L11.2 5.1" stroke="#7cc0ee" stroke-width="0.5"/></svg>
<svg style="left:514.7px;top:645.60px" width="15.4" height="15.4" viewBox="0 0 16 16"><rect width="16" height="16" rx="3.5" fill="#5ED465"/><path d="M3.6 12.6L4.3 10.2Q3.3 8.6 3.6 6.8Q4.3 3.8 7.6 3.4Q10.8 3.2 12.1 6Q13 8.7 11.1 10.9Q9 12.9 6 11.9Z" fill="none" stroke="#07661a" stroke-width="1.1" stroke-linejoin="round"/><path d="M6.2 5.9Q6 7.6 7.6 9.3Q9.2 10.6 10.3 10L10.3 9.3L9.2 8.7L8.6 9.2Q7.3 8.5 6.9 7.3L7.3 6.7L6.8 5.6Z" fill="#07661a"/></svg>
<div class="t" style="left:558.82px;top:645.66px;font-size:16px;color:#EAAD40;font-weight:normal;transform:scaleX(0.9799);transform-origin:0 0;-webkit-text-stroke:0.25px #282828;">lampadario.ru</div>
<div class="t" style="left:732.80px;top:646.08px;font-size:15.5px;color:#f0f0f0;font-weight:normal;transform:scaleX(1.0155);transform-origin:0 0;-webkit-text-stroke:0.25px #282828;">Санкт-Петербург</div>
<div class="a" style="left:904.2px;top:641.40px;width:140.6px;height:23.8px;border:1px solid #434343;border-radius:12px;color:#bcbcbc;font-size:11.4px;line-height:21.8px;padding-top:1.9px;text-align:center;white-space:nowrap">Розетки и выключатели</div><div class="a" style="left:1050.1px;top:645.20px;width:16.2px;height:16.2px;border-radius:50%;background:#3d3d3d;color:#b4b4b4;font-size:11.6px;line-height:16.2px;padding-top:0px;text-align:center;letter-spacing:-0.6px;white-space:nowrap">+1</div>
<div class="a" style="left:1090.2px;top:641.40px;width:39.6px;height:23.8px;border:1px solid #434343;border-radius:12px;color:#bcbcbc;font-size:11.4px;line-height:21.8px;padding-top:1.9px;text-align:center;white-space:nowrap">Vibia</div><div class="a" style="left:1135.1px;top:645.20px;width:16.2px;height:16.2px;border-radius:50%;background:#3d3d3d;color:#b4b4b4;font-size:11.6px;line-height:16.2px;padding-top:0px;text-align:center;letter-spacing:-0.6px;white-space:nowrap">+1</div>
<svg style="left:1213.4px;top:647.5999999999999px" width="16" height="12" viewBox="0 0 16 12"><g fill="none" stroke="#CDA657" stroke-width="1.15"><path d="M0.9 6Q4 1.1 8 1.1Q12 1.1 15.1 6Q12 10.9 8 10.9Q4 10.9 0.9 6Z"/><circle cx="8" cy="6" r="2.3"/></g></svg>
<svg style="left:1245px;top:647px" width="13" height="13" viewBox="0 0 13 13"><g stroke="#D6B360" stroke-width="1"><path d="M6.5 0.7V12.3M0.7 6.5H12.3"/></g></svg>
<svg style="left:1274px;top:646.9px" width="14" height="14" viewBox="0 0 14 14"><path d="M7 0.9L8.85 4.75L13.05 5.3L9.95 8.2L10.75 12.4L7 10.35L3.25 12.4L4.05 8.2L0.95 5.3L5.15 4.75Z" fill="none" stroke="#CDA657" stroke-width="1.1" stroke-linejoin="round"/></svg>
<div class="a" style="left:92px;top:731.4px;width:1215.5px;height:1px;background:#3a3a3a"></div>
<svg style="left:103px;top:690.50px" width="30" height="30" viewBox="0 0 30 30" font-family="Liberation Sans"><circle cx="15" cy="15" r="15" fill="#3a3a3a"/><circle cx="15" cy="15" r="9" fill="none" stroke="#cfcfcf" stroke-width="0.6"/><rect x="5" y="10.3" width="20" height="9.6" fill="#3a3a3a"/><g fill="#e6e6e6" font-size="5.6" text-anchor="middle"><text x="15" y="14.7" textLength="15" lengthAdjust="spacingAndGlyphs">WOOD</text><text x="15" y="19.8" textLength="19" lengthAdjust="spacingAndGlyphs">MARKET</text></g></svg>
<div class="a" style="left:140px;top:701.50px;width:8px;height:8px;border-radius:50%;background:#66C13A"></div>
<div class="t" style="left:154.63px;top:697.56px;font-size:16px;color:#f0f0f0;font-weight:normal;transform:scaleX(0.8664);transform-origin:0 0;-webkit-text-stroke:0.25px #282828;">KINGWOOD</div>
<div class="t" style="left:334.00px;top:698.28px;font-size:15.5px;color:#f0f0f0;font-weight:normal;transform:scaleX(0.9528);transform-origin:0 0;-webkit-text-stroke:0.25px #282828;">+7 916 999 60 88</div>
<svg style="left:492.2px;top:697.80px" width="15.4" height="15.4" viewBox="0 0 16 16"><rect width="16" height="16" rx="3.5" fill="#4AA3E2"/><path d="M3.2 7.6L12.6 3.9L11 12.4L7.6 9.9L6.2 11.3L6.4 8.9L11.2 5.1L5.5 8.4Z" fill="#16324a"/><path d="M6.4 8.9L11.2 5.1" stroke="#7cc0ee" stroke-width="0.5"/></svg>
<svg style="left:514.7px;top:697.80px" width="15.4" height="15.4" viewBox="0 0 16 16"><rect width="16" height="16" rx="3.5" fill="#5ED465"/><path d="M3.6 12.6L4.3 10.2Q3.3 8.6 3.6 6.8Q4.3 3.8 7.6 3.4Q10.8 3.2 12.1 6Q13 8.7 11.1 10.9Q9 12.9 6 11.9Z" fill="none" stroke="#07661a" stroke-width="1.1" stroke-linejoin="round"/><path d="M6.2 5.9Q6 7.6 7.6 9.3Q9.2 10.6 10.3 10L10.3 9.3L9.2 8.7L8.6 9.2Q7.3 8.5 6.9 7.3L7.3 6.7L6.8 5.6Z" fill="#07661a"/></svg>
<div class="t" style="left:560.78px;top:697.86px;font-size:16px;color:#EAAD40;font-weight:normal;transform:scaleX(0.9791);transform-origin:0 0;-webkit-text-stroke:0.25px #282828;">wood-m.ru</div>
<div class="t" style="left:731.80px;top:698.28px;font-size:15.5px;color:#f0f0f0;font-weight:normal;transform:scaleX(0.9981);transform-origin:0 0;-webkit-text-stroke:0.25px #282828;">Москва</div>
<div class="a" style="left:904.2px;top:693.60px;width:117.2px;height:23.8px;border:1px solid #434343;border-radius:12px;color:#bcbcbc;font-size:11.4px;line-height:21.8px;padding-top:1.9px;text-align:center;white-space:nowrap">Шпон натуральный</div><div class="a" style="left:1026.7px;top:697.40px;width:16.2px;height:16.2px;border-radius:50%;background:#3d3d3d;color:#b4b4b4;font-size:11.6px;line-height:16.2px;padding-top:0px;text-align:center;letter-spacing:-0.6px;white-space:nowrap">+2</div>
<div class="a" style="left:1090.2px;top:693.60px;width:73.0px;height:23.8px;border:1px solid #434343;border-radius:12px;color:#bcbcbc;font-size:11.4px;line-height:21.8px;padding-top:1.9px;text-align:center;white-space:nowrap">KINGWOOD</div>
<svg style="left:1183.7px;top:699.8px" width="16" height="12" viewBox="0 0 16 12"><g fill="none" stroke="#CDA657" stroke-width="1.15"><path d="M0.9 6Q4 1.1 8 1.1Q12 1.1 15.1 6Q12 10.9 8 10.9Q4 10.9 0.9 6Z"/><circle cx="8" cy="6" r="2.3"/></g></svg>
<svg style="left:1214.4px;top:698.8px" width="14" height="14" viewBox="0 0 14 14"><g fill="none" stroke="#CDA657" stroke-width="1.1" stroke-linejoin="round" stroke-linecap="round"><path d="M1.7 12.7L2.1 9.2L9.7 1.6L13 4.9L5.4 12.5Z"/><path d="M3.8 10.9L11.3 3.3"/><path d="M8.4 2.9L11.7 6.2"/><path d="M6.8 13.1H12.8"/></g></svg>
<svg style="left:1245px;top:699px" width="13" height="13" viewBox="0 0 13 13"><g stroke="#D6B360" stroke-width="1"><path d="M6.5 0.7V12.3M0.7 6.5H12.3"/></g></svg>
<svg style="left:1274px;top:699.1px" width="14" height="14" viewBox="0 0 14 14"><path d="M7 0.9L8.85 4.75L13.05 5.3L9.95 8.2L10.75 12.4L7 10.35L3.25 12.4L4.05 8.2L0.95 5.3L5.15 4.75Z" fill="#F5B335" stroke="#F5B335" stroke-width="1.2" stroke-linejoin="round"/></svg>
<div class="a" style="left:92px;top:783.6px;width:1215.5px;height:1px;background:#3a3a3a"></div>
<svg style="left:103px;top:742.70px" width="30" height="30" viewBox="0 0 30 30" font-family="Liberation Sans"><circle cx="15" cy="15" r="15" fill="#BE2A30"/><path d="M5.5 21.5L10.5 8.5H13.5L16 21.5H12.8L12.3 18.6H9.4L8.6 21.5Z" fill="#fff"/><rect x="4.8" y="15.8" width="8" height="1.8" fill="#BE2A30"/><path d="M14.8 8.5H20Q25 8.5 25 13Q25 17.5 20 17.5H18.5L17.3 21.5H14.5L15.5 17.5Z" fill="#fff"/><path d="M18.7 11.2H20Q21.8 11.2 21.8 13Q21.8 14.8 20 14.8H18Z" fill="#BE2A30"/></svg>
<div class="a" style="left:140px;top:753.70px;width:8px;height:8px;border-radius:50%;background:#F5B335"></div>
<div class="a" style="left:156px;top:741.10px;width:105.0px;height:33.4px;border-radius:4.5px;background:#F5B335;color:#fff6e6;font-size:13.2px;line-height:33.4px;padding-left:9.7px;white-space:nowrap">Средний риск</div>
<svg style="left:150.5px;top:752.70px" width="7" height="10" viewBox="0 0 7 10"><path d="M6 0L1.5 5L6 10Z" fill="#F5B335"/></svg>
<div class="t" style="left:334.00px;top:750.48px;font-size:15.5px;color:#f0f0f0;font-weight:normal;transform:scaleX(0.9147);transform-origin:0 0;-webkit-text-stroke:0.25px #282828;">+7 495 797 27 25</div>
<svg style="left:492.2px;top:750.00px" width="15.4" height="15.4" viewBox="0 0 16 16"><rect width="16" height="16" rx="3.5" fill="#4AA3E2"/><path d="M3.2 7.6L12.6 3.9L11 12.4L7.6 9.9L6.2 11.3L6.4 8.9L11.2 5.1L5.5 8.4Z" fill="#16324a"/><path d="M6.4 8.9L11.2 5.1" stroke="#7cc0ee" stroke-width="0.5"/></svg>
<svg style="left:514.7px;top:750.00px" width="15.4" height="15.4" viewBox="0 0 16 16"><rect width="16" height="16" rx="3.5" fill="#5ED465"/><path d="M3.6 12.6L4.3 10.2Q3.3 8.6 3.6 6.8Q4.3 3.8 7.6 3.4Q10.8 3.2 12.1 6Q13 8.7 11.1 10.9Q9 12.9 6 11.9Z" fill="none" stroke="#07661a" stroke-width="1.1" stroke-linejoin="round"/><path d="M6.2 5.9Q6 7.6 7.6 9.3Q9.2 10.6 10.3 10L10.3 9.3L9.2 8.7L8.6 9.2Q7.3 8.5 6.9 7.3L7.3 6.7L6.8 5.6Z" fill="#07661a"/></svg>
<div class="t" style="left:559.80px;top:750.06px;font-size:16px;color:#EAAD40;font-weight:normal;transform:scaleX(1.0208);transform-origin:0 0;-webkit-text-stroke:0.25px #282828;">artparquet.ru</div>
<div class="t" style="left:731.80px;top:750.48px;font-size:15.5px;color:#f0f0f0;font-weight:normal;transform:scaleX(0.9981);transform-origin:0 0;-webkit-text-stroke:0.25px #282828;">Москва</div>
<div class="a" style="left:904.2px;top:745.80px;width:130.1px;height:23.8px;border:1px solid #434343;border-radius:12px;color:#bcbcbc;font-size:11.4px;line-height:21.8px;padding-top:1.9px;text-align:center;white-space:nowrap">Паркет производство</div><div class="a" style="left:1039.6px;top:749.60px;width:16.2px;height:16.2px;border-radius:50%;background:#3d3d3d;color:#b4b4b4;font-size:11.6px;line-height:16.2px;padding-top:0px;text-align:center;letter-spacing:-0.6px;white-space:nowrap">+1</div>
<div class="a" style="left:1090.2px;top:745.80px;width:82.6px;height:23.8px;border:1px solid #434343;border-radius:12px;color:#bcbcbc;font-size:11.4px;line-height:21.8px;padding-top:1.9px;text-align:center;white-space:nowrap">ArtParquetru</div><div class="a" style="left:1178.1px;top:749.60px;width:16.2px;height:16.2px;border-radius:50%;background:#3d3d3d;color:#b4b4b4;font-size:11.6px;line-height:16.2px;padding-top:0px;text-align:center;letter-spacing:-0.6px;white-space:nowrap">+1</div>
<svg style="left:1183.7px;top:752.0px" width="16" height="12" viewBox="0 0 16 12"><g fill="none" stroke="#CDA657" stroke-width="1.15"><path d="M0.9 6Q4 1.1 8 1.1Q12 1.1 15.1 6Q12 10.9 8 10.9Q4 10.9 0.9 6Z"/><circle cx="8" cy="6" r="2.3"/></g></svg>
<svg style="left:1214.4px;top:751.0px" width="14" height="14" viewBox="0 0 14 14"><g fill="none" stroke="#CDA657" stroke-width="1.1" stroke-linejoin="round" stroke-linecap="round"><path d="M1.7 12.7L2.1 9.2L9.7 1.6L13 4.9L5.4 12.5Z"/><path d="M3.8 10.9L11.3 3.3"/><path d="M8.4 2.9L11.7 6.2"/><path d="M6.8 13.1H12.8"/></g></svg>
<svg style="left:1245px;top:752px" width="13" height="13" viewBox="0 0 13 13"><g stroke="#D6B360" stroke-width="1"><path d="M6.5 0.7V12.3M0.7 6.5H12.3"/></g></svg>
<svg style="left:1274px;top:751.3000000000001px" width="14" height="14" viewBox="0 0 14 14"><path d="M7 0.9L8.85 4.75L13.05 5.3L9.95 8.2L10.75 12.4L7 10.35L3.25 12.4L4.05 8.2L0.95 5.3L5.15 4.75Z" fill="none" stroke="#CDA657" stroke-width="1.1" stroke-linejoin="round"/></svg>
<div class="a" style="left:92px;top:835.8px;width:1215.5px;height:1px;background:#3a3a3a"></div>
<svg style="left:103px;top:794.90px" width="30" height="30" viewBox="0 0 30 30" font-family="Liberation Sans"><circle cx="15" cy="15" r="15" fill="#1c1c1c"/><g fill="#fff"><path d="M4.2 5.8H17.9L16.7 9.3H5.7V13.8H14.8V12H11.6L12.6 10.5H17.9V17.1H4.2Q2.2 17.1 2.2 15.1V7.8Q2.2 5.8 4.2 5.8Z"/><path d="M19.4 12.4H26.6L25.8 14.6H18.7Z"/><path d="M10.8 17.6H14.8V20.6H23.9V18.6H20.5L21.2 16.6H27.1V23.1H12.8Q10.8 23.1 10.8 21.1Z"/></g></svg>
<div class="a" style="left:140px;top:805.90px;width:8px;height:8px;border-radius:50%;background:#66C13A"></div>
<div class="t" style="left:155.50px;top:801.96px;font-size:16px;color:#f0f0f0;font-weight:normal;transform:scaleX(0.8358);transform-origin:0 0;-webkit-text-stroke:0.25px #282828;">GENGLASS &amp; GENGR...</div>
<div class="t" style="left:334.00px;top:802.68px;font-size:15.5px;color:#f0f0f0;font-weight:normal;transform:scaleX(0.9180);transform-origin:0 0;-webkit-text-stroke:0.25px #282828;">+7 925 140 75 05</div>
<svg style="left:492.2px;top:802.20px" width="15.4" height="15.4" viewBox="0 0 16 16"><rect width="16" height="16" rx="3.5" fill="#5ED465"/><path d="M3.6 12.6L4.3 10.2Q3.3 8.6 3.6 6.8Q4.3 3.8 7.6 3.4Q10.8 3.2 12.1 6Q13 8.7 11.1 10.9Q9 12.9 6 11.9Z" fill="none" stroke="#07661a" stroke-width="1.1" stroke-linejoin="round"/><path d="M6.2 5.9Q6 7.6 7.6 9.3Q9.2 10.6 10.3 10L10.3 9.3L9.2 8.7L8.6 9.2Q7.3 8.5 6.9 7.3L7.3 6.7L6.8 5.6Z" fill="#07661a"/></svg>
<div class="t" style="left:559.80px;top:802.26px;font-size:16px;color:#EAAD40;font-weight:normal;transform:scaleX(0.9790);transform-origin:0 0;-webkit-text-stroke:0.25px #282828;">genglass.ru</div>
<div class="t" style="left:732.80px;top:802.68px;font-size:15.5px;color:#f0f0f0;font-weight:normal;transform:scaleX(1.0070);transform-origin:0 0;-webkit-text-stroke:0.25px #282828;">Домодедово</div>
<div class="a" style="left:904.2px;top:798.00px;width:105.3px;height:23.8px;border:1px solid #434343;border-radius:12px;color:#bcbcbc;font-size:11.4px;line-height:21.8px;padding-top:1.9px;text-align:center;white-space:nowrap">Мебель на заказ</div>
<div class="a" style="left:1090.2px;top:798.00px;width:71.1px;height:23.8px;border:1px solid #434343;border-radius:12px;color:#bcbcbc;font-size:11.4px;line-height:21.8px;padding-top:1.9px;text-align:center;white-space:nowrap">GENGLASS</div>
<svg style="left:1183.7px;top:804.1999999999999px" width="16" height="12" viewBox="0 0 16 12"><g fill="none" stroke="#CDA657" stroke-width="1.15"><path d="M0.9 6Q4 1.1 8 1.1Q12 1.1 15.1 6Q12 10.9 8 10.9Q4 10.9 0.9 6Z"/><circle cx="8" cy="6" r="2.3"/></g></svg>
<svg style="left:1214.4px;top:803.1999999999999px" width="14" height="14" viewBox="0 0 14 14"><g fill="none" stroke="#CDA657" stroke-width="1.1" stroke-linejoin="round" stroke-linecap="round"><path d="M1.7 12.7L2.1 9.2L9.7 1.6L13 4.9L5.4 12.5Z"/><path d="M3.8 10.9L11.3 3.3"/><path d="M8.4 2.9L11.7 6.2"/><path d="M6.8 13.1H12.8"/></g></svg>
<svg style="left:1245px;top:804px" width="13" height="13" viewBox="0 0 13 13"><g stroke="#D6B360" stroke-width="1"><path d="M6.5 0.7V12.3M0.7 6.5H12.3"/></g></svg>
<svg style="left:1274px;top:803.5px" width="14" height="14" viewBox="0 0 14 14"><path d="M7 0.9L8.85 4.75L13.05 5.3L9.95 8.2L10.75 12.4L7 10.35L3.25 12.4L4.05 8.2L0.95 5.3L5.15 4.75Z" fill="none" stroke="#CDA657" stroke-width="1.1" stroke-linejoin="round"/></svg>
<div class="a" style="left:96.5px;top:888.0px;width:1206.5px;height:1px;background:#3a3a3a"></div>
<svg style="left:103px;top:847.10px" width="30" height="30" viewBox="0 0 30 30" font-family="Liberation Sans"><circle cx="15" cy="15" r="15" fill="#fdfdfd"/><rect x="4.2" y="10.8" width="21.6" height="6.6" fill="none" stroke="#111" stroke-width="0.8"/><text x="15" y="16" text-anchor="middle" font-size="5" font-weight="bold" fill="#111" textLength="19" lengthAdjust="spacingAndGlyphs">FACTURA</text><rect x="7" y="19.3" width="16" height="0.7" fill="#666"/></svg>
<div class="a" style="left:140px;top:858.10px;width:8px;height:8px;border-radius:50%;background:#66C13A"></div>
<div class="t" style="left:154.63px;top:854.16px;font-size:16px;color:#f0f0f0;font-weight:normal;transform:scaleX(0.8743);transform-origin:0 0;-webkit-text-stroke:0.25px #282828;">FACTURA</div>
<div class="t" style="left:336.80px;top:854.88px;font-size:15.5px;color:#f0f0f0;font-weight:normal;transform:scaleX(0.9409);transform-origin:0 0;-webkit-text-stroke:0.25px #282828;">+7 800 550 33 54</div>
<svg style="left:492.2px;top:854.40px" width="15.4" height="15.4" viewBox="0 0 16 16"><rect width="16" height="16" rx="3.5" fill="#4AA3E2"/><path d="M3.2 7.6L12.6 3.9L11 12.4L7.6 9.9L6.2 11.3L6.4 8.9L11.2 5.1L5.5 8.4Z" fill="#16324a"/><path d="M6.4 8.9L11.2 5.1" stroke="#7cc0ee" stroke-width="0.5"/></svg>
<svg style="left:514.7px;top:854.40px" width="15.4" height="15.4" viewBox="0 0 16 16"><rect width="16" height="16" rx="3.5" fill="#5ED465"/><path d="M3.6 12.6L4.3 10.2Q3.3 8.6 3.6 6.8Q4.3 3.8 7.6 3.4Q10.8 3.2 12.1 6Q13 8.7 11.1 10.9Q9 12.9 6 11.9Z" fill="none" stroke="#07661a" stroke-width="1.1" stroke-linejoin="round"/><path d="M6.2 5.9Q6 7.6 7.6 9.3Q9.2 10.6 10.3 10L10.3 9.3L9.2 8.7L8.6 9.2Q7.3 8.5 6.9 7.3L7.3 6.7L6.8 5.6Z" fill="#07661a"/></svg>
<div class="t" style="left:559.80px;top:854.46px;font-size:16px;color:#EAAD40;font-weight:normal;transform:scaleX(1.0135);transform-origin:0 0;-webkit-text-stroke:0.25px #282828;">ffactura.ru</div>
<div class="t" style="left:732.80px;top:854.88px;font-size:15.5px;color:#f0f0f0;font-weight:normal;transform:scaleX(1.0155);transform-origin:0 0;-webkit-text-stroke:0.25px #282828;">Санкт-Петербург</div>
<div class="a" style="left:904.2px;top:850.20px;width:42.7px;height:23.8px;border:1px solid #434343;border-radius:12px;color:#bcbcbc;font-size:11.4px;line-height:21.8px;padding-top:1.9px;text-align:center;white-space:nowrap">Обои</div>
<div class="a" style="left:1090.2px;top:850.20px;width:53.0px;height:23.8px;border:1px solid #434343;border-radius:12px;color:#bcbcbc;font-size:11.4px;line-height:21.8px;padding-top:1.9px;text-align:center;white-space:nowrap">Factura</div>
<svg style="left:1213.4px;top:856.3999999999999px" width="16" height="12" viewBox="0 0 16 12"><g fill="none" stroke="#CDA657" stroke-width="1.15"><path d="M0.9 6Q4 1.1 8 1.1Q12 1.1 15.1 6Q12 10.9 8 10.9Q4 10.9 0.9 6Z"/><circle cx="8" cy="6" r="2.3"/></g></svg>
<svg style="left:1245px;top:856px" width="13" height="13" viewBox="0 0 13 13"><g stroke="#D6B360" stroke-width="1"><path d="M6.5 0.7V12.3M0.7 6.5H12.3"/></g></svg>
<svg style="left:1274px;top:855.6999999999999px" width="14" height="14" viewBox="0 0 14 14"><path d="M7 0.9L8.85 4.75L13.05 5.3L9.95 8.2L10.75 12.4L7 10.35L3.25 12.4L4.05 8.2L0.95 5.3L5.15 4.75Z" fill="none" stroke="#CDA657" stroke-width="1.1" stroke-linejoin="round"/></svg>
<div class="a" style="left:103px;top:903.7px;width:37.2px;height:37.2px;border-radius:4px;background:#F5B335"></div>
<div class="a" style="left:103.5px;top:903.7px;width:36px;height:37.2px;line-height:37.2px;text-align:center;font-size:15px;color:#333">1</div>
<div class="a" style="left:148.1px;top:903.7px;width:36px;height:37.2px;line-height:37.2px;text-align:center;font-size:15px;color:#dcdcdc">2</div>
<div class="a" style="left:192.8px;top:903.7px;width:36px;height:37.2px;line-height:37.2px;text-align:center;font-size:15px;color:#dcdcdc">3</div>
<div class="a" style="left:237.1px;top:903.7px;width:36px;height:37.2px;line-height:37.2px;text-align:center;font-size:15px;color:#dcdcdc">4</div>
<div class="a" style="left:281.8px;top:903.7px;width:36px;height:37.2px;line-height:37.2px;text-align:center;font-size:15px;color:#dcdcdc">5</div>
<div class="a" style="left:326.4px;top:903.7px;width:36px;height:37.2px;line-height:37.2px;text-align:center;font-size:15px;color:#dcdcdc">6</div>
<div class="a" style="left:371.8px;top:903.7px;width:36px;height:37.2px;line-height:37.2px;text-align:center;font-size:15px;color:#dcdcdc">...</div>
<div class="a" style="left:416.8px;top:903.7px;width:36px;height:37.2px;line-height:37.2px;text-align:center;font-size:15px;color:#dcdcdc">24</div>
<div class="a" style="left:461px;top:903.7px;width:37px;height:37.2px;border-radius:4px;border:1px solid #4f4f4f"></div>
<svg style="left:0;top:0" width="1" height="1"><path d="M477.5 916.5L482 922.3L477.5 928" fill="none" stroke="#8a8a8a" stroke-width="1.2"/></svg>
</body></html>
